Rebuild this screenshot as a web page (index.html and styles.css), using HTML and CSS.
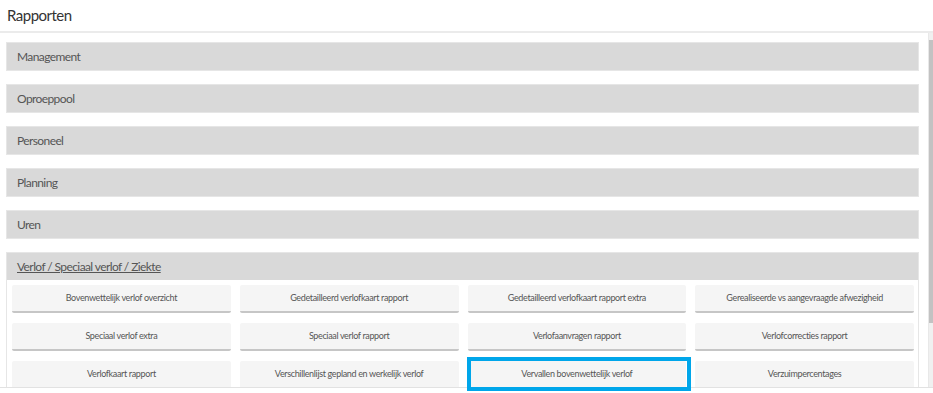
FILE: index.html
```html
<!DOCTYPE html>
<html lang="nl">
<head>
<meta charset="utf-8">
<title>Rapporten</title>
<link rel="stylesheet" href="styles.css">
</head>
<body>
<div class="app">
  <h1 class="page-title">Rapporten</h1>
  <div class="scroller">
    <div class="content">
      <div class="panel"><div class="panel-head">Management</div></div>
      <div class="panel"><div class="panel-head">Oproeppool</div></div>
      <div class="panel"><div class="panel-head">Personeel</div></div>
      <div class="panel"><div class="panel-head">Planning</div></div>
      <div class="panel"><div class="panel-head">Uren</div></div>
      <div class="panel open">
        <div class="panel-head"><span class="u">Verlof / Speciaal verlof / Ziekte</span></div>
        <div class="panel-body">
          <div class="btn">Bovenwettelijk verlof overzicht</div>
          <div class="btn">Gedetailleerd verlofkaart rapport</div>
          <div class="btn">Gedetailleerd verlofkaart rapport extra</div>
          <div class="btn">Gerealiseerde vs aangevraagde afwezigheid</div>
          <div class="btn">Speciaal verlof extra</div>
          <div class="btn">Speciaal verlof rapport</div>
          <div class="btn">Verlofaanvragen rapport</div>
          <div class="btn">Verlofcorrecties rapport</div>
          <div class="btn">Verlofkaart rapport</div>
          <div class="btn">Verschillenlijst gepland en werkelijk verlof</div>
          <div class="btn">Vervallen bovenwettelijk verlof</div>
          <div class="btn">Verzuimpercentages</div>
        </div>
      </div>
    </div>
    <div class="scrollbar"><div class="thumb"></div></div>
  </div>
  <div class="highlight"></div>
</div>
</body>
</html>
```
FILE: styles.css
```css
html, body {
  margin: 0;
  padding: 0;
  background: #fff;
}
body {
  font-family: "Source Sans Pro", Lato, "Liberation Sans", sans-serif;
  color: #555;
}
.app {
  position: relative;
  width: 933px;
  height: 393px;
  overflow: hidden;
}
.page-title {
  margin: 0;
  height: 33px;
  box-sizing: border-box;
  padding: 6px 0 0 7px;
  font-size: 15px;
  letter-spacing: -0.5px;
  font-weight: 400;
  color: #333;
  border-bottom: 2px solid #ebebeb;
}
.scroller {
  position: relative;
  height: 354px;
  border-bottom: 1px solid #e2e2e2;
  overflow: hidden;
}
.content {
  padding: 9px 9px 0 6px;
  border-right: 1px solid #e8e8e8;
  width: 929px;
  box-sizing: border-box;
  height: 100%;
}
.panel {
  margin-bottom: 13px;
  border: 1px solid #e6e6e6;
}
.panel-head {
  background: #d9d9d9;
  height: 27px;
  line-height: 27px;
  padding: 0 10px;
  font-size: 12px;
  letter-spacing: -0.6px;
  color: #555;
}
.panel-head .u {
  text-decoration: underline;
}
.panel-body {
  display: grid;
  grid-template-columns: repeat(4, 1fr);
  gap: 10px 9px;
  padding: 5px 4px 5px 5px;
  background: #fff;
}
.btn {
  background: #f5f5f5;
  height: 26px;
  line-height: 26px;
  border-bottom: 2px solid #c6c6c6;
  border-radius: 2px;
  text-align: center;
  font-size: 9px;
  letter-spacing: -0.35px;
  color: #555;
  white-space: nowrap;
}
.scrollbar {
  position: absolute;
  right: 0;
  top: 0;
  width: 4px;
  height: 100%;
  background: #f0f0f0;
}
.thumb {
  margin-top: 7px;
  height: 283px;
  background: #c2c2c2;
}
.highlight {
  position: absolute;
  left: 467px;
  top: 357px;
  width: 224px;
  height: 34px;
  box-sizing: border-box;
  border: 4px solid #00a6ea;
}
```
